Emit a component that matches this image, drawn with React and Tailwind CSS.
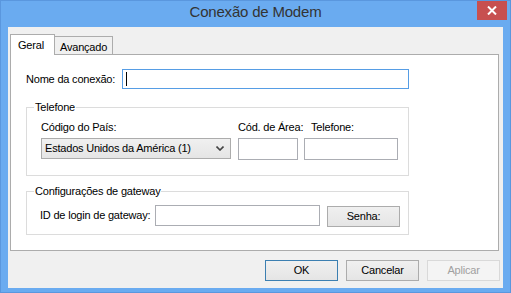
import React from 'react';

const font = { fontFamily: '"Liberation Sans", Arial, sans-serif' };

function TextBox({ className = '', children }) {
  return (
    <div className={`bg-white border border-[#abadb3] ${className}`}>{children}</div>
  );
}

function Button({ children, className = '', variant = 'normal' }) {
  const look =
    variant === 'default'
      ? 'border-[#3c7fb1] bg-gradient-to-b from-[#f0f0f0] to-[#e5e5e5] text-black'
      : variant === 'disabled'
      ? 'border-[#d9d9d9] bg-[#f4f4f4] text-[#a0a0a0]'
      : 'border-[#acacac] bg-gradient-to-b from-[#f0f0f0] to-[#e5e5e5] text-black';
  return (
    <div className={`flex items-center justify-center border w-[73px] h-[21px] ${look} ${className}`}>
      {children}
    </div>
  );
}

export default function App() {
  return (
    <div
      className="w-[511px] h-[293px] bg-[#6aabf0] border border-[#5a97de] flex flex-col overflow-hidden text-[11px] tracking-[-0.2px] text-black"
      style={font}
    >
      {/* title bar */}
      <div className="h-[26px] shrink-0 relative flex items-center justify-center">
        <span className="text-[15px] text-[#333] tracking-[-0.2px] -mt-[3px]">Conexão de Modem</span>
        <div className="absolute right-[3px] -top-px w-[30px] h-[20px] bg-[#c75050] flex items-center justify-center">
          <svg width="10" height="9" viewBox="0 0 10 9">
            <path d="M1 0.5 L9 8.5 M9 0.5 L1 8.5" stroke="white" strokeWidth="2" />
          </svg>
        </div>
      </div>

      {/* client area */}
      <div className="ml-[7px] w-[495px] h-[261px] bg-[#f0f0f0] flex flex-col">
        {/* tabs */}
        <div className="mt-[7px] ml-[2px] h-[20px] flex items-end">
          <div className="relative z-10 -mb-px w-[45px] h-[21px] bg-white border border-b-0 border-[#acacac] pl-[7px] pt-[2px]">
            Geral
          </div>
          <div className="-ml-px w-[59px] h-[18px] bg-[#f0f0f0] border border-b-0 border-[#acacac] pl-[5px] pt-[2px]">
            Avançado
          </div>
        </div>

        {/* tab panel */}
        <div className="ml-[2px] w-[489px] h-[197px] bg-white border border-[#acacac] pl-[15px] flex flex-col">
          <div className="mt-[14px] flex items-center">
            <span className="w-[96px]">Nome da conexão:</span>
            <div className="w-[287px] h-[20px] border border-[#569de5] bg-white flex items-center pl-[3px]">
              <div className="w-px h-[14px] bg-black" />
            </div>
          </div>

          <fieldset className="mt-[10px] w-[383px] border border-[#dcdcdc] pl-[14px] pb-[15px]">
            <legend className="-ml-[7px] px-px leading-[16px]">Telefone</legend>
            <div className="mt-[4px] flex">
              <div className="w-[190px] flex flex-col">
                <span className="leading-[16px]">Código do País:</span>
                <div className="mt-[3px] w-[190px] h-[21px] border border-[#acacac] bg-gradient-to-b from-[#f0f0f0] to-[#e5e5e5] flex items-center justify-between pl-[3px] pr-[6px]">
                  <span>Estados Unidos da América (1)</span>
                  <svg width="8" height="5" viewBox="0 0 8 5">
                    <path d="M0.5 0.5 L4 4 L7.5 0.5" fill="none" stroke="#444" strokeWidth="1.6" />
                  </svg>
                </div>
              </div>
              <div className="ml-[7px] w-[60px] flex flex-col">
                <span className="leading-[16px] whitespace-nowrap">Cód. de Área:</span>
                <TextBox className="mt-[3px] w-[60px] h-[22px]" />
              </div>
              <div className="ml-[6px] w-[94px] flex flex-col">
                <span className="leading-[16px] pl-[7px]">Telefone:</span>
                <TextBox className="mt-[3px] w-[94px] h-[22px]" />
              </div>
            </div>
          </fieldset>

          <fieldset className="mt-[7px] w-[383px] border border-[#dcdcdc] pl-[13px] pb-[7px]">
            <legend className="-ml-[6px] px-px leading-[16px]">Configurações de gateway</legend>
            <div className="mt-[6px] flex items-start">
              <span className="w-[115px] leading-[21px]">ID de login de gateway:</span>
              <TextBox className="w-[165px] h-[21px]" />
              <Button className="ml-[7px] mt-px">Senha:</Button>
            </div>
          </fieldset>
        </div>

        {/* dialog buttons */}
        <div className="mt-[9px] pr-[3px] flex justify-end gap-[8px]">
          <Button variant="default">OK</Button>
          <Button>Cancelar</Button>
          <Button variant="disabled">Aplicar</Button>
        </div>
      </div>
    </div>
  );
}
